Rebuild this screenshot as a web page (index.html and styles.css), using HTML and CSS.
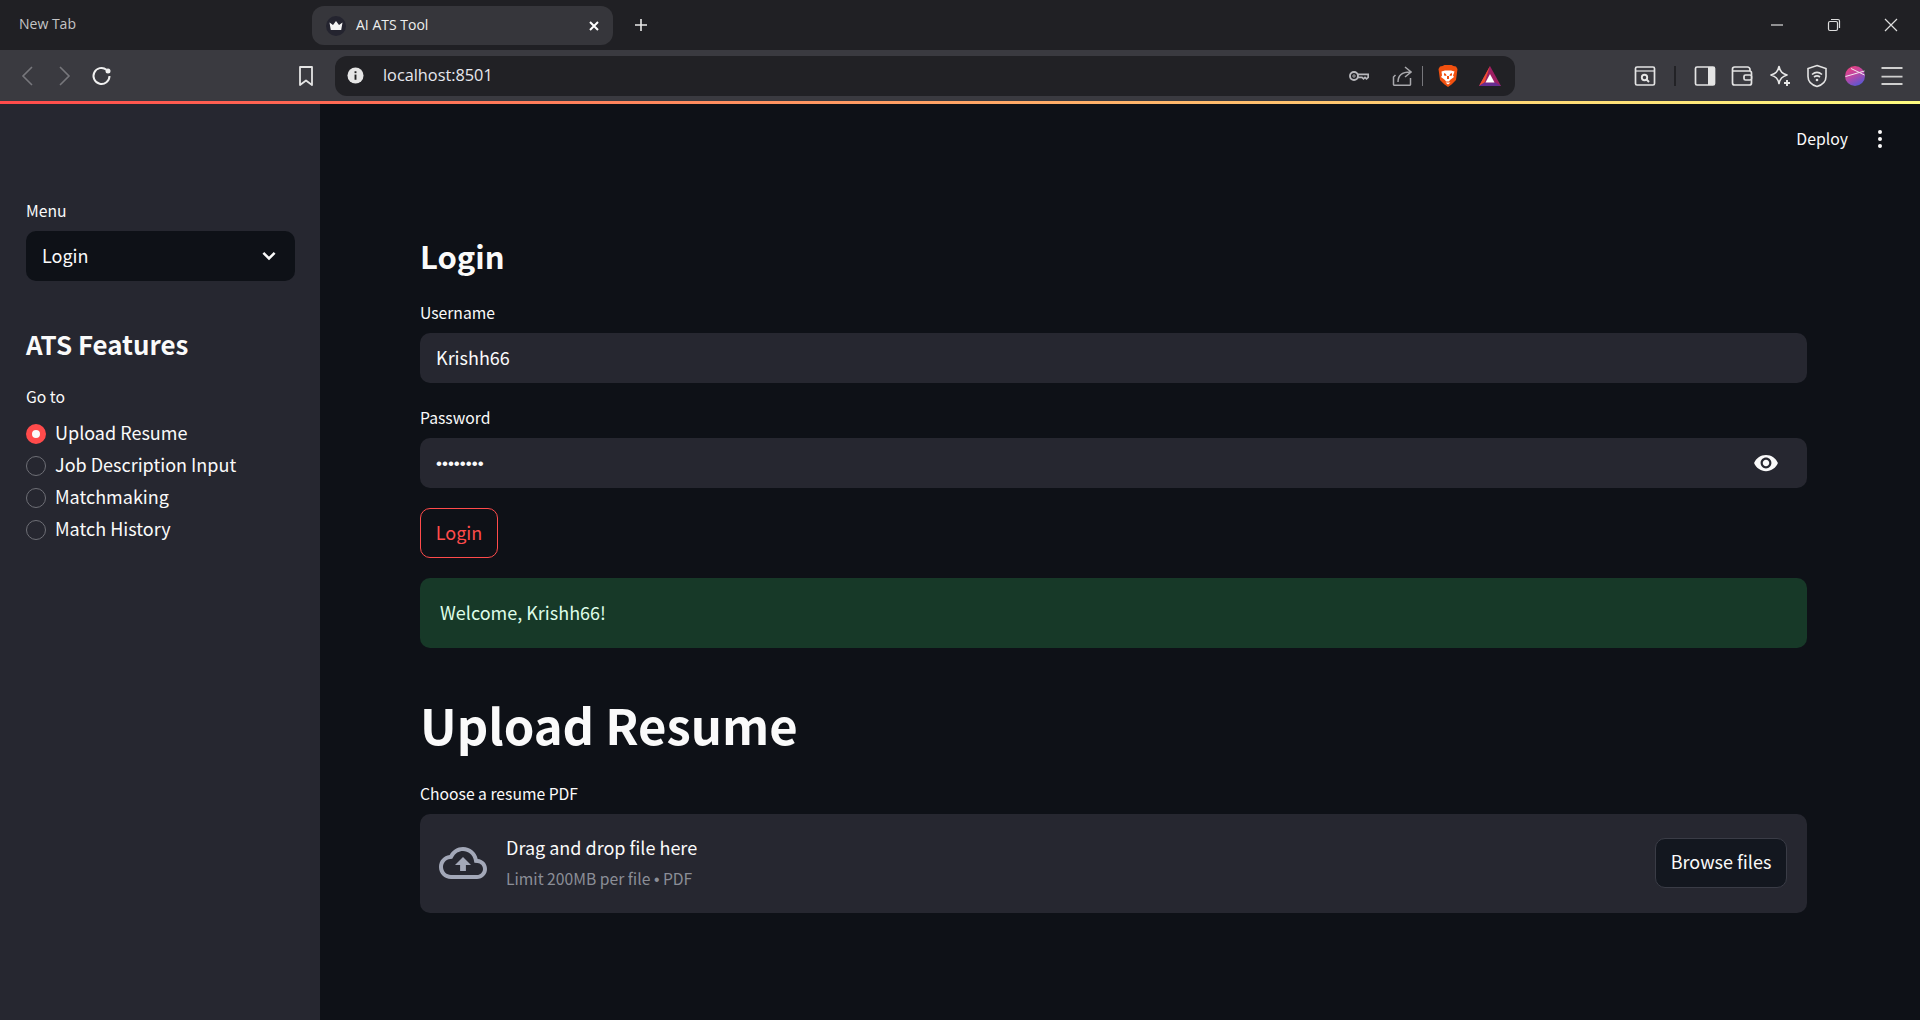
FILE: index.html
```html
<!DOCTYPE html>
<html lang="en">
<head>
<meta charset="utf-8">
<title>AI ATS Tool</title>
<link rel="stylesheet" href="styles.css">
</head>
<body>
<div class="tabstrip">
  <div class="tab-plain">New Tab</div>
  <div class="tab-active">
    <svg class="favicon" viewBox="0 0 20 20"><circle cx="10" cy="10" r="10" fill="#24242f"/><path d="M3.500 6.500l3.500 2.500 3-4 3 4 3.500-2.500-1.300 7.500H4.800z" fill="#f4f4f4"/></svg>
    <span class="tab-title">AI ATS Tool</span>
    <svg class="tab-close" viewBox="0 0 12 12"><path d="M2 2l8 8M10 2l-8 8" stroke="#fff" stroke-width="2"/></svg>
  </div>
  <svg class="tab-new" viewBox="0 0 16 16"><path d="M8 2v12M2 8h12" stroke="#e8e8e8" stroke-width="1.600"/></svg>
  <div class="win-controls">
    <svg class="win-btn" viewBox="0 0 16 16"><path d="M2 8h12" stroke="#ddd" stroke-width="1.200"/></svg>
    <svg class="win-btn" viewBox="0 0 16 16"><rect x="2.500" y="4.500" width="9" height="9" rx="1.500" fill="none" stroke="#ddd" stroke-width="1.200"/><path d="M5 2.500h7a1.500 1.500 0 0 1 1.500 1.500v7" fill="none" stroke="#ddd" stroke-width="1.200"/></svg>
    <svg class="win-btn" viewBox="0 0 16 16"><path d="M2 2l12 12M14 2L2 14" stroke="#ddd" stroke-width="1.200"/></svg>
  </div>
</div>

<div class="toolbar">
  <span class="slot"><svg class="ico" viewBox="0 0 24 24"><path d="M17 3l-9 9 9 9" fill="none" stroke="#77777c" stroke-width="1.600"/></svg></span>
  <span class="slot"><svg class="ico" viewBox="0 0 24 24"><path d="M8 3l9 9-9 9" fill="none" stroke="#77777c" stroke-width="1.600"/></svg></span>
  <span class="slot"><svg class="ico" viewBox="0 0 24 24"><path d="M19.500 12a8 8 0 1 1-3-6.300" fill="none" stroke="#f0f0f0" stroke-width="2"/><circle cx="18" cy="7" r="2.500" fill="#f0f0f0"/></svg></span>
  <span class="slot slot-bookmark"><svg class="ico" viewBox="0 0 24 24"><path d="M6 3h12v18l-6-4.500L6 21z" fill="none" stroke="#e4e4e4" stroke-width="1.800" stroke-linejoin="round"/></svg></span>
  <div class="address">
    <svg class="info" viewBox="0 0 18 18"><circle cx="9" cy="9" r="8.500" fill="#e6e6e6"/><rect x="8" y="8" width="2" height="5.500" fill="#222"/><rect x="8" y="4.500" width="2" height="2" fill="#222"/></svg>
    <span class="url">localhost:8501</span>
    <div class="address-icons">
      <svg class="ico-key" viewBox="0 0 20 12"><circle cx="5" cy="6" r="4" fill="none" stroke="#b8b8bc" stroke-width="1.900"/><circle cx="5" cy="6" r="1.200" fill="none" stroke="#b8b8bc" stroke-width=".9"/><path d="M9 4.300h10.200v3l-1.700 1.500-1.500-1.400-1.500 1.400-1.500-1.400H9" fill="none" stroke="#b8b8bc" stroke-width="1.700"/></svg>
      <svg class="ico-share" viewBox="0 0 20 20"><path d="M18.500 12v6.500a.8.800 0 0 1-.8.800H2.300a.8.800 0 0 1-.8-.8V11l2-2" fill="none" stroke="#a8a8ac" stroke-width="1.500"/><path d="M6 16c0-6 3.500-10 12-10M13 1l6 5-6 5" fill="none" stroke="#a8a8ac" stroke-width="1.500"/></svg>
      <span class="addr-sep"></span>
      <svg class="ico-brave" viewBox="0 0 20 22"><path d="M4.500 1l2-1h7l2 1 2.500.5L19.500 4 18 15l-4.500 4.500L10 22l-3.500-2.500L2 15 .5 4 2 1.500z" fill="#f1500f"/><path d="M3.500 6.500L7 5.500h6l3.500 1-1.500 4 1 1.500-4 3-1 1.500h-3l-1-1.500-4-3 1-1.500z" fill="#fff"/><path d="M6 8l2 1 .5 2-2.500-.5zM14 8l-2 1-.5 2 2.500-.5z" fill="#f1500f"/><path d="M9 11h2v3H9z" fill="#f1500f"/><path d="M7.500 17.500h5L10 19.500z" fill="#fff"/></svg>
      <svg class="ico-bat" viewBox="0 0 22 20"><path d="M11 0L0 20h22z" fill="#9e1f63"/><path d="M11 0L0 20l5.500-3.500z" fill="#ef4f2e"/><path d="M0 20h22l-5.500-3.500h-11z" fill="#662d91"/><path d="M11 8l-4.500 8.500h9z" fill="#fff"/></svg>
    </div>
  </div>
  <div class="toolbar-right">
    <span class="slot"><svg class="ico" viewBox="0 0 24 24"><rect x="2.500" y="3" width="19" height="18" rx="1.500" fill="none" stroke="#e4e4e4" stroke-width="1.700"/><path d="M3 7h18" stroke="#e4e4e4" stroke-width="1.200"/><circle cx="11.500" cy="13.500" r="2.700" fill="none" stroke="#e4e4e4" stroke-width="1.900"/><path d="M13.500 15.500l2.500 2.500" stroke="#e4e4e4" stroke-width="1.900"/></svg></span>
    <span class="tool-sep"></span>
    <span class="slot"><svg class="ico" viewBox="0 0 24 24"><rect x="2.500" y="3" width="19" height="18" rx="1.500" fill="none" stroke="#e4e4e4" stroke-width="1.700"/><rect x="15" y="3" width="6.500" height="18" fill="#e4e4e4"/></svg></span>
    <span class="slot"><svg class="ico" viewBox="0 0 24 24"><path d="M20 7V5.500A2.500 2.500 0 0 0 17.500 3h-13A2 2 0 0 0 2.500 5v14a2 2 0 0 0 2 2h15a2 2 0 0 0 2-2V9a2 2 0 0 0-2-2H3" fill="none" stroke="#e4e4e4" stroke-width="1.700"/><rect x="14" y="11" width="7.500" height="5" rx="1.500" fill="#3a3a40" stroke="#e4e4e4" stroke-width="1.700"/></svg></span>
    <span class="slot"><svg class="ico" viewBox="0 0 24 24"><path d="M11 2.500c1 5 3 7 8 8.500-5 1.500-7 3.500-8 8.500-1-5-3-7-8-8.500 5-1.500 7-3.500 8-8.500z" fill="none" stroke="#e8e8e8" stroke-width="1.700" stroke-linejoin="round"/><path d="M19 16v6M16 19h6" stroke="#e8e8e8" stroke-width="1.900"/></svg></span>
    <span class="slot"><svg class="ico" viewBox="0 0 24 24"><path d="M12 1.500l9 3v8c0 5-4 8.500-9 10-5-1.500-9-5-9-10v-8z" fill="none" stroke="#e4e4e4" stroke-width="1.600"/><path d="M7 10.500c3-2.500 7-2.500 10 0M9 13c2-1.500 4-1.500 6 0" fill="none" stroke="#e4e4e4" stroke-width="1.600"/><circle cx="12" cy="16" r="1.300" fill="#e4e4e4"/></svg></span>
    <span class="slot"><svg class="ball" viewBox="0 0 20 20"><defs><linearGradient id="ballfill" x1="0.200" y1="0" x2="0.700" y2="1"><stop offset="0" stop-color="#ee3f7d"/><stop offset=".5" stop-color="#b748a8"/><stop offset="1" stop-color="#5258d6"/></linearGradient></defs><circle cx="10" cy="10" r="10" fill="url(#ballfill)"/><path d="M.5 10.500L19.500 5M6 2.500L19.500 9" fill="none" stroke="#f2e6ee" stroke-width="1"/></svg></span>
    <span class="slot"><svg class="ico" viewBox="0 0 24 24"><path d="M1.500 4h21M1.500 12.700h21M1.500 20h21" stroke="#cfcfcf" stroke-width="1.800"/></svg></span>
  </div>
</div>
<div class="accent-line"></div>

<div class="app">
  <aside class="sidebar">
    <div class="label">Menu</div>
    <div class="select">
      <span>Login</span>
      <svg class="chevron" viewBox="0 0 16 16"><path d="M3.500 5.500L8 10l4.500-4.500" fill="none" stroke="#fafafa" stroke-width="2"/></svg>
    </div>
    <h2 class="side-title">ATS Features</h2>
    <div class="label side-goto">Go to</div>
    <ul class="radios">
      <li class="radio-row"><span class="radio radio-on"></span>Upload Resume</li>
      <li class="radio-row"><span class="radio"></span>Job Description Input</li>
      <li class="radio-row"><span class="radio"></span>Matchmaking</li>
      <li class="radio-row"><span class="radio"></span>Match History</li>
    </ul>
  </aside>
  <main class="main">
    <header class="main-header">
      <span class="deploy">Deploy</span>
      <svg class="kebab" viewBox="0 0 6 20"><circle cx="3" cy="3" r="2" fill="#fafafa"/><circle cx="3" cy="10" r="2" fill="#fafafa"/><circle cx="3" cy="17" r="2" fill="#fafafa"/></svg>
    </header>
    <section class="content">
      <h3 class="login-title">Login</h3>
      <div class="label field-label">Username</div>
      <div class="input">Krishh66</div>
      <div class="label field-label field-label-pass">Password</div>
      <div class="input input-pass">
        <span class="dots">••••••••</span>
        <svg class="eye" viewBox="0 0 24 24"><path fill="#fafafa" d="M12 4.500C7 4.500 2.730 7.610 1 12c1.730 4.390 6 7.500 11 7.500s9.270-3.110 11-7.500c-1.730-4.390-6-7.500-11-7.500zM12 17c-2.760 0-5-2.240-5-5s2.240-5 5-5 5 2.240 5 5-2.240 5-5 5zm0-8c-1.660 0-3 1.340-3 3s1.340 3 3 3 3-1.340 3-3-1.340-3-3-3z"/></svg>
      </div>
      <button class="btn-login" type="button">Login</button>
      <div class="alert">Welcome, Krishh66!</div>
      <h1 class="page-title">Upload Resume</h1>
      <div class="label upload-label">Choose a resume PDF</div>
      <div class="dropzone">
        <svg class="cloud" viewBox="0 0 24 24"><path fill="#a3a8b8" d="M19.350 10.040C18.670 6.590 15.640 4 12 4 9.110 4 6.600 5.640 5.350 8.040 2.340 8.360 0 10.910 0 14c0 3.310 2.690 6 6 6h13c2.760 0 5-2.240 5-5 0-2.640-2.050-4.780-4.650-4.960zM19 18H6c-2.210 0-4-1.790-4-4 0-2.050 1.530-3.760 3.560-3.970l1.070-.11.500-.95C8.080 7.140 9.940 6 12 6c2.620 0 4.880 1.860 5.390 4.430l.30 1.500 1.530.11c1.560.10 2.780 1.410 2.780 2.960 0 1.650-1.350 3-3 3zM8 13h2.550v3h2.900v-3H16l-4-4z"/></svg>
        <div class="drop-text">
          <div class="drop-main">Drag and drop file here</div>
          <div class="drop-sub">Limit 200MB per file <span class="bullet">•</span> PDF</div>
        </div>
        <button class="btn-browse" type="button">Browse files</button>
      </div>
    </section>
  </main>
</div>
</body>
</html>
```
FILE: styles.css
```css
* { box-sizing: border-box; }
html, body { margin: 0; padding: 0; }
body {
  width: 1920px;
  height: 1020px;
  overflow: hidden;
  display: flex;
  flex-direction: column;
  background: #0e1117;
  color: #fafafa;
  font-family: "Noto Sans CJK SC", "Noto Sans", sans-serif;
}
h1, h2, h3, ul { margin: 0; padding: 0; }
button { font-family: inherit; cursor: pointer; }

/* browser chrome */
.tabstrip {
  height: 50px;
  flex: none;
  background: #202024;
  display: flex;
  align-items: flex-start;
  font-family: "Open Sans", "Noto Sans", sans-serif;
  font-size: 14px;
}
.tab-plain {
  width: 312px;
  padding-left: 19px;
  line-height: 48px;
  color: #c4c4c6;
}
.tab-active {
  width: 301px;
  height: 39px;
  margin-top: 6px;
  background: #36363b;
  border-radius: 12px;
  display: flex;
  align-items: center;
  padding: 0 13px 0 14px;
  color: #eeeeee;
}
.favicon { width: 20px; height: 20px; margin-right: 10px; }
.tab-title { flex: 1; margin-top: -2px; }
.tab-close { width: 12px; height: 12px; }
.tab-new { width: 16px; height: 16px; margin: 17px 0 0 20px; }
.win-controls { margin-left: auto; display: flex; padding: 17px 0 0 0; }
.win-btn { width: 16px; height: 16px; margin-right: 41px; }
.win-btn:last-child { margin-right: 21px; }

.toolbar {
  height: 51px;
  flex: none;
  background: #3a3a40;
  display: flex;
  align-items: center;
  padding: 0 9px 0 8px;
}
.slot {
  width: 37.500px;
  height: 30px;
  flex: none;
  display: flex;
  align-items: center;
  justify-content: center;
}
.ico { width: 24px; height: 24px; }
.slot-bookmark { margin-left: 167px; }
.address {
  width: 1180px;
  height: 40px;
  margin-left: 10px;
  background: #212125;
  border-radius: 12px;
  display: flex;
  align-items: center;
  padding: 0 14px 0 12px;
  font-family: "Open Sans", "Noto Sans", sans-serif;
}
.info { width: 17px; height: 17px; margin-right: 19px; }
.url { font-size: 16.300px; color: #e6e8ee; margin-top: -2px; }
.address-icons { margin-left: auto; display: flex; align-items: center; }
.ico-key { width: 20px; height: 12px; }
.ico-share { width: 20px; height: 20px; margin-left: 23px; }
.addr-sep { width: 1px; height: 20px; background: #77777c; margin-left: 10px; }
.ico-brave { width: 20px; height: 22px; margin-left: 15px; }
.ico-bat { width: 22px; height: 20px; margin-left: 21px; }
.toolbar-right { margin-left: auto; display: flex; align-items: center; }
.tool-sep { width: 2px; height: 20px; background: #222226; margin: 0 10px; }
.ball { width: 20px; height: 20px; }
.accent-line {
  height: 3px;
  flex: none;
  background: linear-gradient(90deg, #ff4b4b, #fffd80);
}

/* app */
.app {
  flex: 1;
  display: grid;
  grid-template-columns: 320px 1fr;
  min-height: 0;
}
.label { font-size: 15.700px; line-height: 24px; color: #fafafa; }
.sidebar {
  background: #262730;
  padding: 95px 25px 0 26px;
}
.select {
  height: 50px;
  margin-top: 8px;
  background: #0e1117;
  border-radius: 10px;
  display: flex;
  align-items: center;
  justify-content: space-between;
  padding: 0 16px 3px;
  font-size: 18px;
}
.chevron { width: 20px; height: 20px; margin-top: 3px; }
.side-title {
  margin-top: 43px;
  padding-bottom: 1px;
  font-size: 25.900px;
  line-height: 39px;
  font-weight: 700;
}
.side-goto { margin-top: 21px; }
.radios { margin-top: 8px; list-style: none; }
.radio-row {
  height: 32px;
  padding-bottom: 2px;
  display: flex;
  align-items: center;
  font-size: 18px;
}
.radio {
  width: 20px;
  height: 20px;
  margin: 4px 9px 0 0;
  border-radius: 50%;
  border: 1.500px solid #6e6f76;
  background: #262730;
}
.radio-on {
  border: 6px solid #ff4b4b;
  background: #fafafa;
}

.main { padding: 0 113px 0 100px; min-width: 0; }
.main-header {
  height: 70px;
  padding-bottom: 1px;
  display: flex;
  align-items: center;
  justify-content: flex-end;
  margin-right: -113px;
  padding-right: 37px;
}
.deploy { font-size: 15.800px; }
.kebab { width: 6px; height: 20px; margin-left: 29px; }
.content { padding-top: 58px; }
.login-title { font-size: 31px; line-height: 48px; padding-bottom: 2px; font-weight: 700; }
.field-label { margin-top: 19px; }
.field-label-pass { margin-top: 23px; }
.input {
  height: 50px;
  margin-top: 8px;
  background: #262730;
  border-radius: 10px;
  padding: 0 16px 3px;
  display: flex;
  align-items: center;
  font-size: 18px;
}
.input-pass { justify-content: space-between; padding: 0 28px 0 16px; }
.dots { font-family: "Liberation Sans", sans-serif; font-size: 17px; margin-top: 1px; }
.eye { width: 26px; height: 26px; }
.btn-login {
  display: block;
  height: 50px;
  width: 78px;
  margin-top: 20px;
  padding: 0 0 3px;
  background: #0e1117;
  border: 1px solid #ff4b4b;
  border-radius: 10px;
  color: #ff4b4b;
  font-size: 18px;
}
.alert {
  height: 70px;
  margin-top: 20px;
  padding: 0 20px 3px;
  background: #173928;
  border-radius: 10px;
  display: flex;
  align-items: center;
  font-size: 18px;
  color: #dffde9;
}
.page-title {
  margin-top: 42px;
  font-size: 49px;
  line-height: 68px;
  padding-bottom: 2px;
  font-weight: 700;
}
.upload-label { margin-top: 22px; }
.dropzone {
  height: 99px;
  margin-top: 8px;
  background: #262730;
  border-radius: 10px;
  display: flex;
  align-items: center;
  padding: 0 20px 2px 19px;
}
.cloud { width: 48px; height: 48px; margin-right: 19px; }
.drop-text { flex: 1; }
.drop-main { font-size: 18px; line-height: 28px; }
.drop-sub { margin-top: 6px; font-size: 15.700px; line-height: 24px; color: #8b8e97; }
.bullet { font-family: "Liberation Sans", sans-serif; }
.btn-browse {
  width: 132px;
  height: 50px;
  padding: 0 0 3px;
  background: #13171f;
  border: 1px solid #3a3c46;
  border-radius: 10px;
  color: #fafafa;
  font-size: 18px;
}
```
